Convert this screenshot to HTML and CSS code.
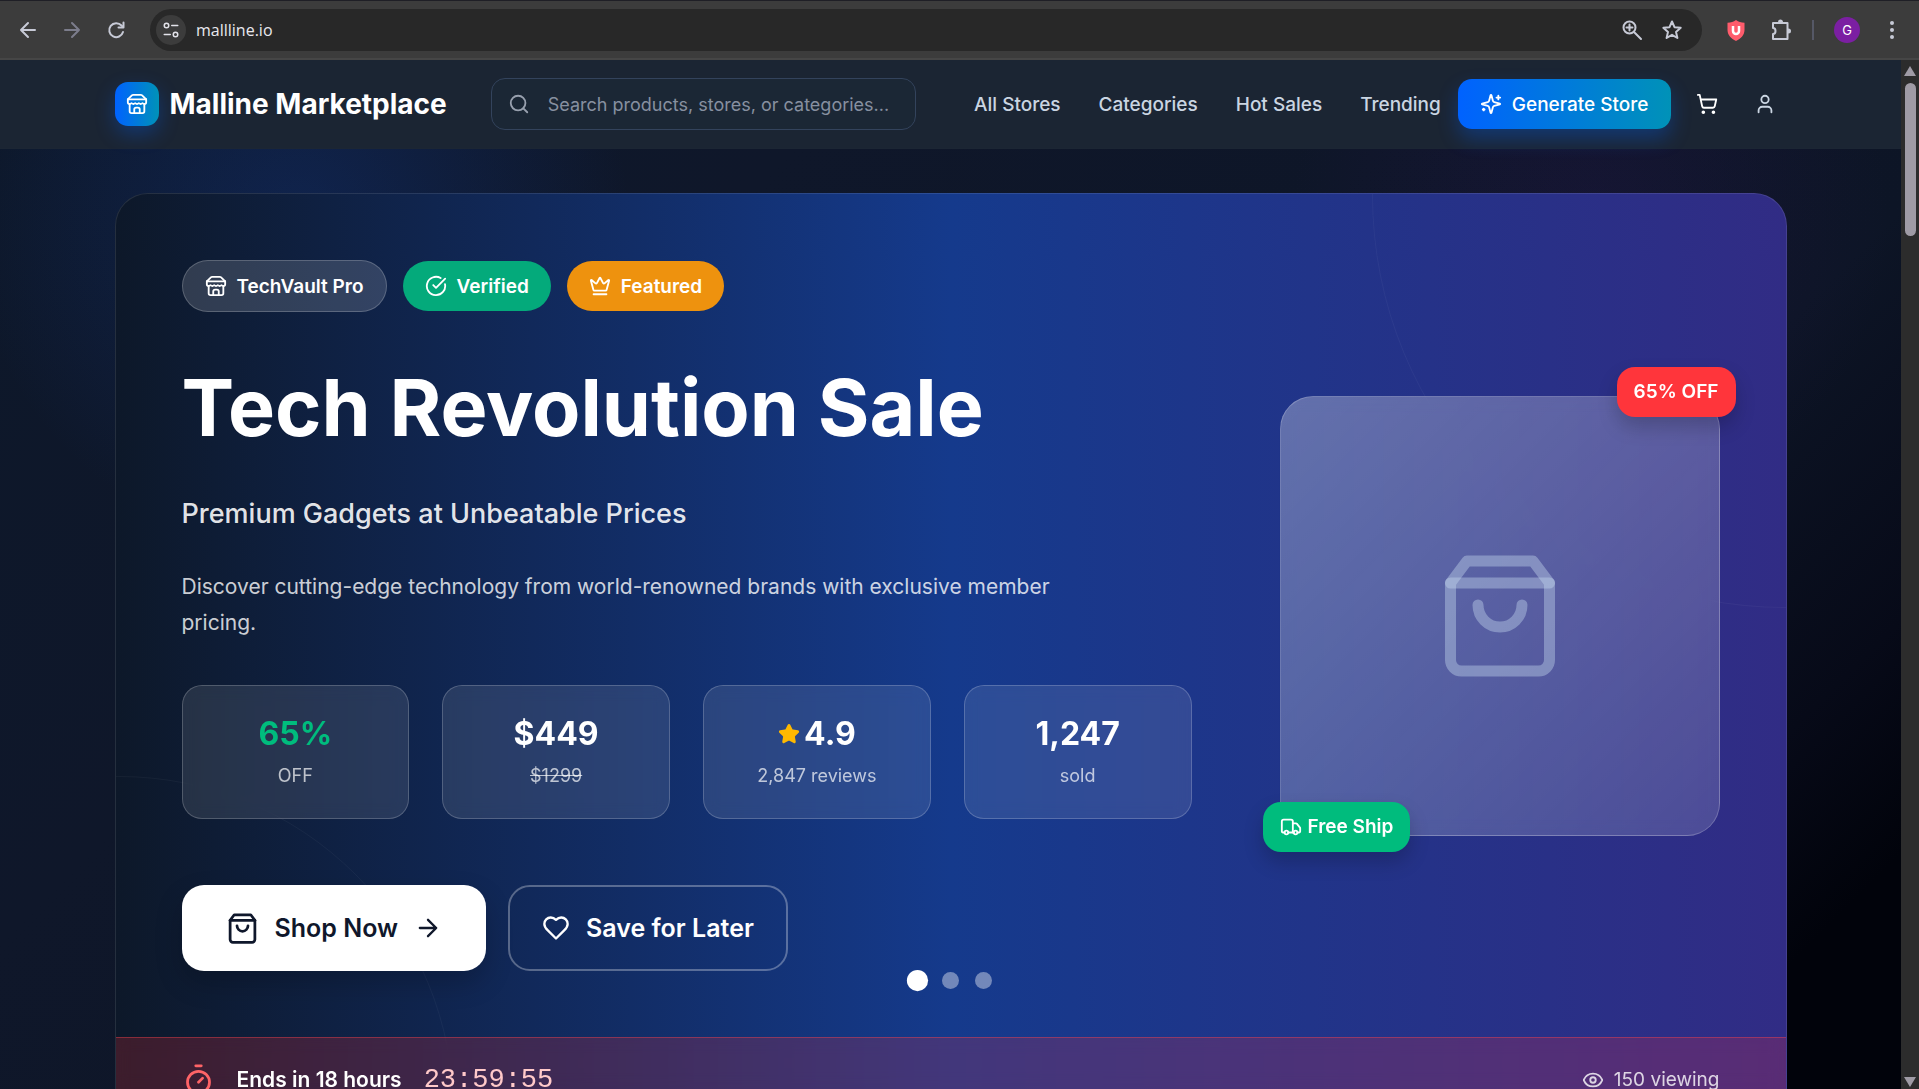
FILE: index.html
```html
<!DOCTYPE html>
<html lang="en">
    <head>
        <meta charset="utf-8">
        <title>Malline Marketplace</title>
        <link rel="stylesheet" href="styles.css">
    </head>
    <body>
        <!-- shared icons -->
        <svg class="sprite" aria-hidden="true">
            <symbol id="store" viewBox="0 0 24 24"><path d="m2 7 4.41-4.41A2 2 0 0 1 7.83 2h8.34a2 2 0 0 1 1.42.59L22 7"/><path d="M4 12v8a2 2 0 0 0 2 2h12a2 2 0 0 0 2-2v-8"/><path d="M15 22v-4a2 2 0 0 0-2-2h-2a2 2 0 0 0-2 2v4"/><path d="M2 7h20"/><path d="M22 7v3a2 2 0 0 1-2 2a2.7 2.7 0 0 1-1.59-.63.7.7 0 0 0-.82 0A2.7 2.7 0 0 1 16 12a2.7 2.7 0 0 1-1.59-.63.7.7 0 0 0-.82 0A2.7 2.7 0 0 1 12 12a2.7 2.7 0 0 1-1.59-.63.7.7 0 0 0-.82 0A2.7 2.7 0 0 1 8 12a2.7 2.7 0 0 1-1.59-.63.7.7 0 0 0-.82 0A2.7 2.7 0 0 1 4 12a2 2 0 0 1-2-2V7"/></symbol>
            <symbol id="bag" viewBox="0 0 24 24"><path d="M6 2 3 6v14a2 2 0 0 0 2 2h14a2 2 0 0 0 2-2V6l-3-4Z"/><path d="M3 6h18"/><path d="M16 10a4 4 0 0 1-8 0"/></symbol>
        </svg>

        <div class="toolbar">
            <button class="tool" aria-label="Back"><svg class="icon" viewBox="0 0 24 24"><path d="M19 12H5M12 5l-7 7 7 7"/></svg></button>
            <button class="tool dim" aria-label="Forward"><svg class="icon" viewBox="0 0 24 24"><path d="M5 12h14M12 5l7 7-7 7"/></svg></button>
            <button class="tool" aria-label="Reload"><svg class="icon" viewBox="0 0 24 24"><path d="M19 14a7 7 0 1 1-1.500-6.500L19 9"/><path d="M19.500 4.500v5h-5"/></svg></button>
            <div class="address">
                <button class="site-info" aria-label="Site information"><svg class="icon" viewBox="0 0 24 24"><circle cx="6" cy="6" r="3"/><path d="M13 6h8M3 18h8"/><circle cx="18" cy="18" r="3"/></svg></button>
                <input class="url" type="text" value="mallline.io" aria-label="Address">
                <button class="tool" aria-label="Zoom"><svg class="icon" viewBox="0 0 24 24"><circle cx="9.500" cy="9.500" r="6"/><path d="m14 14 7 7M6.500 9.500h6M9.500 6.500v6"/></svg></button>
                <button class="tool" aria-label="Bookmark"><svg class="icon" viewBox="0 0 24 24"><path d="m12 3.500 2.500 5.700 6.200.6-4.700 4.100 1.400 6.100-5.400-3.200L6.600 20 8 13.900 3.300 9.800l6.200-.6z"/></svg></button>
            </div>
            <button class="tool" aria-label="Shield extension"><svg viewBox="0 0 24 24"><path fill="#ff5c6c" d="M12 2c2.500 2 5 2.500 8.500 2.800V12c0 5-3.500 8.500-8.500 11-5-2.500-8.500-6-8.500-11V4.800C7 4.500 9.500 4 12 2z"/><path fill="none" stroke="#fff" stroke-width="2.500" d="M9 8v5a3 3 0 0 0 6 0V8"/></svg></button>
            <button class="tool" aria-label="Extensions"><svg class="icon" viewBox="0 0 24 24"><path d="M5 10V5h14.500v16H5v-5c1.600 0 2.500-1.200 2.500-3S6.600 10 5 10z"/><path fill="currentColor" d="M11 4a1.500 1.500 0 0 1 3 0zM20.500 11.500a1.500 1.500 0 0 1 0 3z"/></svg></button>
            <span class="divider"></span>
            <button class="avatar" aria-label="Profile">G</button>
            <button class="tool" aria-label="Menu"><svg viewBox="0 0 24 24" fill="#c7cad6"><circle cx="12" cy="5" r="2"/><circle cx="12" cy="12" r="2"/><circle cx="12" cy="19" r="2"/></svg></button>
        </div>

        <div class="window">
            <div class="page">
                <header class="header">
                    <div class="container header-row">
                        <a class="brand" href="#">
                            <span class="brand-logo"><svg class="icon"><use href="#store"/></svg></span>
                            Malline Marketplace
                        </a>
                        <label class="search">
                            <svg class="icon" viewBox="0 0 24 24"><circle cx="11" cy="11" r="8"/><path d="m21 21-4.300-4.300"/></svg>
                            <input type="text" placeholder="Search products, stores, or categories..." aria-label="Search">
                        </label>
                        <nav class="nav">
                            <a href="#">All Stores</a>
                            <a href="#">Categories</a>
                            <a href="#">Hot Sales</a>
                            <a href="#">Trending</a>
                        </nav>
                        <div class="actions">
                            <button class="generate">
                                <svg class="icon" viewBox="0 0 24 24"><path d="M9.937 15.500A2 2 0 0 0 8.500 14.063l-6.135-1.582a.5.5 0 0 1 0-.962L8.500 9.936A2 2 0 0 0 9.937 8.500l1.582-6.135a.5.5 0 0 1 .963 0L14.063 8.500A2 2 0 0 0 15.500 9.937l6.135 1.581a.5.5 0 0 1 0 .964L15.500 14.063a2 2 0 0 0-1.437 1.437l-1.582 6.135a.5.5 0 0 1-.963 0z"/><path d="M20 3v4M22 5h-4M4 17v2M5 18H3"/></svg>
                                Generate Store
                            </button>
                            <button class="icon-btn" aria-label="Cart"><svg class="icon" viewBox="0 0 24 24"><circle cx="8" cy="21" r="1"/><circle cx="19" cy="21" r="1"/><path d="M2.050 2.050h2l2.660 12.420a2 2 0 0 0 2 1.580h9.780a2 2 0 0 0 1.950-1.570l1.650-7.430H5.120"/></svg></button>
                            <button class="icon-btn account" aria-label="Account"><svg class="icon" viewBox="0 0 24 24"><path d="M19 21v-2a4 4 0 0 0-4-4H9a4 4 0 0 0-4 4v2"/><circle cx="12" cy="7" r="4"/></svg></button>
                        </div>
                    </div>
                </header>

                <main class="container">
                    <section class="hero">
                        <div class="hero-body">
                            <div class="hero-text">
                                <div class="badges">
                                    <span class="badge badge-store"><svg class="icon"><use href="#store"/></svg>TechVault Pro</span>
                                    <span class="badge badge-verified"><svg class="icon" viewBox="0 0 24 24"><path d="M21.801 10A10 10 0 1 1 17 3.335"/><path d="m9 11 3 3L22 4"/></svg>Verified</span>
                                    <span class="badge badge-featured"><svg class="icon" viewBox="0 0 24 24"><path d="M11.562 3.266a.5.5 0 0 1 .876 0L15.390 8.870a1 1 0 0 0 1.516.294L21.183 5.500a.5.5 0 0 1 .798.519l-2.834 10.246a1 1 0 0 1-.956.734H5.810a1 1 0 0 1-.957-.734L2.020 6.020a.5.5 0 0 1 .798-.519l4.276 3.664a1 1 0 0 0 1.516-.294z"/><path d="M5 21h14"/></svg>Featured</span>
                                </div>
                                <div class="copy">
                                    <h1>Tech Revolution Sale</h1>
                                    <h2>Premium Gadgets at Unbeatable Prices</h2>
                                    <p>Discover cutting-edge technology from world-renowned brands with exclusive member pricing.</p>
                                </div>
                                <div class="stats">
                                    <div class="stat"><strong class="green">65%</strong><span>OFF</span></div>
                                    <div class="stat"><strong>$449</strong><s>$1299</s></div>
                                    <div class="stat"><strong><svg class="star" viewBox="0 0 24 24"><path d="M11.525 2.295a.53.53 0 0 1 .95 0l2.310 4.679a2.123 2.123 0 0 0 1.595 1.160l5.166.756a.53.53 0 0 1 .294.904l-3.736 3.638a2.123 2.123 0 0 0-.611 1.878l.882 5.140a.53.53 0 0 1-.771.560l-4.618-2.428a2.122 2.122 0 0 0-1.973 0L6.396 21.010a.53.53 0 0 1-.770-.560l.881-5.139a2.122 2.122 0 0 0-.611-1.879L2.160 9.795a.53.53 0 0 1 .294-.906l5.165-.755a2.122 2.122 0 0 0 1.597-1.160z"/></svg>4.9</strong><span>2,847 reviews</span></div>
                                    <div class="stat"><strong>1,247</strong><span>sold</span></div>
                                </div>
                                <div class="buttons">
                                    <button class="btn btn-shop">
                                        <svg class="icon"><use href="#bag"/></svg>
                                        Shop Now
                                        <svg class="icon arrow" viewBox="0 0 24 24"><path d="M5 12h14M12 5l7 7-7 7"/></svg>
                                    </button>
                                    <button class="btn btn-save">
                                        <svg class="icon" viewBox="0 0 24 24"><path d="M19 14c1.490-1.460 3-3.210 3-5.500A5.500 5.500 0 0 0 16.500 3c-1.760 0-3 .5-4.500 2-1.500-1.500-2.740-2-4.500-2A5.500 5.500 0 0 0 2 8.500c0 2.300 1.500 4.050 3 5.500l7 7Z"/></svg>
                                        Save for Later
                                    </button>
                                </div>
                            </div>
                            <div class="product">
                                <svg class="icon product-icon"><use href="#bag"/></svg>
                                <span class="tag tag-off">65% OFF</span>
                                <span class="tag tag-ship"><svg class="icon" viewBox="0 0 24 24"><path d="M14 18V6a2 2 0 0 0-2-2H4a2 2 0 0 0-2 2v11a1 1 0 0 0 1 1h2"/><path d="M15 18H9"/><path d="M19 18h2a1 1 0 0 0 1-1v-3.650a1 1 0 0 0-.22-.624l-3.480-4.350A1 1 0 0 0 17.520 8H14"/><circle cx="17" cy="18" r="2"/><circle cx="7" cy="18" r="2"/></svg>Free Ship</span>
                            </div>
                            <div class="dots">
                                <button class="dot active" aria-label="Slide 1"></button>
                                <button class="dot" aria-label="Slide 2"></button>
                                <button class="dot" aria-label="Slide 3"></button>
                            </div>
                        </div>
                        <div class="deal">
                            <svg class="icon deal-icon" viewBox="0 0 24 24"><path d="M10 2h4"/><path d="m12 14 3-3"/><circle cx="12" cy="14" r="8"/></svg>
                            <strong>Ends in 18 hours</strong>
                            <time class="countdown">23:59:55</time>
                            <span class="viewing"><svg class="icon" viewBox="0 0 24 24"><path d="M2.062 12.348a1 1 0 0 1 0-.696 10.750 10.750 0 0 1 19.876 0 1 1 0 0 1 0 .696 10.750 10.750 0 0 1-19.876 0"/><circle cx="12" cy="12" r="3"/></svg>150 viewing</span>
                        </div>
                    </section>
                </main>
            </div>
            <div class="scrollbar">
                <span class="scroll-up"></span>
                <span class="scroll-thumb"></span>
                <span class="scroll-down"></span>
            </div>
        </div>
    </body>
</html>
```

FILE: styles.css
```css
* {
    box-sizing: border-box;
}
body {
    margin: 0;
    height: 100vh;
    display: flex;
    flex-direction: column;
    overflow: hidden;
    background: #020308;
    color: #fff;
    font-family: Inter, "Liberation Sans", sans-serif;
    font-size: 19px;
}
button, input {
    font-family: inherit;
    color: inherit;
    border: 0;
    padding: 0;
    background: none;
}
a {
    color: inherit;
    text-decoration: none;
}
h1, h2, p {
    margin: 0;
}
.sprite {
    position: absolute;
    width: 0;
    height: 0;
}
.icon {
    width: 22px;
    height: 22px;
    flex: none;
    fill: none;
    stroke: currentColor;
    stroke-width: 2;
    stroke-linecap: round;
    stroke-linejoin: round;
}

/* browser toolbar */
.toolbar {
    display: flex;
    align-items: center;
    gap: 20px;
    height: 60px;
    flex: none;
    padding: 0 15px 0 16px;
    background: #3c3c3c;
    border-top: 1px solid #1f1f26;
    border-bottom: 2px solid #464646;
    color: #c7cad6;
}
.tool {
    width: 24px;
    height: 24px;
    flex: none;
}
.tool svg {
    display: block;
    width: 24px;
    height: 24px;
}
.dim {
    color: #7c7d8c;
}
.address {
    flex: 1;
    display: flex;
    align-items: center;
    gap: 16px;
    height: 42px;
    margin: 0 2px;
    padding: 0 18px 0 6px;
    border-radius: 21px;
    background: #282828;
}
.site-info {
    display: flex;
    align-items: center;
    justify-content: center;
    width: 30px;
    height: 30px;
    border-radius: 50%;
    background: #3c3c3c;
    color: #e3e3ea;
}
.site-info .icon {
    width: 18px;
    height: 18px;
}
.url {
    flex: 1;
    margin-left: -6px;
    font-family: "Open Sans", sans-serif;
    font-size: 16px;
    color: #e8e8ee;
    outline: none;
}
.divider {
    width: 2px;
    height: 20px;
    background: #555866;
}
.avatar {
    width: 26px;
    height: 26px;
    border-radius: 50%;
    background: #7b1fa2;
    font-size: 13px;
    color: #fff;
}

/* page */
.window {
    flex: 1;
    min-height: 0;
    display: flex;
}
.page {
    flex: 1;
    min-width: 0;
    overflow: hidden;
    background:
        radial-gradient(circle at 300px 160px, rgba(21, 70, 180, 0.26), transparent 330px),
        radial-gradient(circle at 1590px 160px, rgba(60, 20, 110, 0.18), transparent 300px),
        linear-gradient(135deg, #0d182a 0%, #0f172a 30%, #0d1526 70%, #070a18 84%, #01030b 92%);
}
.container {
    max-width: 1716px;
    margin: 0 auto;
    padding: 0 22px;
}
.header {
    border-bottom: 1px solid #1c2634;
    background: #1b2533;
}
.header-row {
    display: flex;
    align-items: center;
    height: 88px;
}
.brand {
    display: flex;
    align-items: center;
    gap: 11px;
    font-size: 28px;
    font-weight: 700;
    white-space: nowrap;
}
.brand-logo {
    display: flex;
    align-items: center;
    justify-content: center;
    width: 44px;
    height: 44px;
    border-radius: 13px;
    background: linear-gradient(90deg, #0062ff, #0092b8);
    box-shadow: 0 8px 20px rgba(0, 98, 255, 0.3);
}
.search {
    flex: 1;
    display: flex;
    align-items: center;
    gap: 18px;
    max-width: 425px;
    height: 52px;
    margin-left: 44px;
    padding: 0 16px;
    border: 1px solid #33435c;
    border-radius: 14px;
    background: #1b2735;
    color: #98a0ae;
}
.search input {
    flex: 1;
    min-width: 0;
    font-size: 18px;
    outline: none;
}
.search input::placeholder {
    color: #8790a0;
}
.nav {
    display: flex;
    gap: 38px;
    margin-left: auto;
    font-weight: 500;
    color: #cad5e2;
    white-space: nowrap;
}
.actions {
    display: flex;
    align-items: center;
    gap: 14px;
    margin-left: 17px;
}
.generate {
    display: flex;
    align-items: center;
    gap: 10px;
    height: 50px;
    padding: 0 22px;
    border-radius: 14px;
    background: linear-gradient(90deg, #0062ff, #0092b8);
    box-shadow: 0 10px 20px rgba(0, 98, 255, 0.3);
    font-size: 19px;
    font-weight: 500;
    white-space: nowrap;
}
.icon-btn {
    display: flex;
    align-items: center;
    justify-content: center;
    width: 44px;
    height: 44px;
}
.account {
    color: #cad5e2;
}

/* hero */
.hero {
    position: relative;
    overflow: hidden;
    margin-top: 44px;
    border: 1px solid rgba(255, 255, 255, 0.1);
    border-radius: 33px;
    background: linear-gradient(90deg, #0d1829, #153a8c 50%, #312c85) border-box;
}
.hero::before, .hero::after {
    content: "";
    position: absolute;
    border: 1px solid rgba(255, 255, 255, 0.04);
    border-radius: 50%;
}
.hero::before {
    top: -412px;
    right: -412px;
    width: 824px;
    height: 824px;
}
.hero::after {
    top: 582px;
    left: -332px;
    width: 668px;
    height: 668px;
}
.hero-body {
    position: relative;
    z-index: 1;
    display: grid;
    grid-template-columns: minmax(0, 1fr) 440px;
    gap: 88px;
    align-items: center;
    padding: 66px;
}
.hero-text {
    display: flex;
    flex-direction: column;
    gap: 44px;
}
.badges {
    display: flex;
    align-items: center;
    gap: 16px;
}
.badge {
    display: flex;
    align-items: center;
    gap: 10px;
    height: 50px;
    padding: 0 22px;
    border-radius: 26px;
    font-size: 19px;
    font-weight: 600;
}
.badge-store {
    height: 52px;
    border: 1px solid rgba(255, 255, 255, 0.2);
    background: rgba(255, 255, 255, 0.15);
}
.badge-verified {
    background: #04aa7b;
}
.badge-featured {
    background: #ee920e;
}
.copy {
    display: flex;
    flex-direction: column;
    gap: 37px;
}
h1 {
    font-size: 79px;
    line-height: 102px;
    font-weight: 700;
}
h2 {
    font-size: 27px;
    line-height: 37px;
    font-weight: 500;
    color: rgba(255, 255, 255, 0.9);
}
.copy p {
    max-width: 924px;
    font-size: 21px;
    line-height: 36px;
    color: rgba(255, 255, 255, 0.8);
}
.stats {
    display: grid;
    grid-template-columns: repeat(4, 1fr);
    gap: 33px;
}
.stat {
    display: flex;
    flex-direction: column;
    align-items: center;
    gap: 6px;
    padding: 26px 16px 28px;
    border: 1px solid rgba(255, 255, 255, 0.2);
    border-radius: 20px;
    background: rgba(255, 255, 255, 0.1);
    backdrop-filter: blur(8px);
    font-size: 18px;
    line-height: 28px;
    color: rgba(255, 255, 255, 0.7);
}
.stat strong {
    display: flex;
    align-items: center;
    gap: 4px;
    font-size: 32px;
    line-height: 44px;
    color: #fff;
}
.stat .green {
    color: #00bc7d;
}
.star {
    width: 22px;
    height: 22px;
    fill: #ffb900;
    stroke: #ffb900;
    stroke-width: 2;
}
.buttons {
    display: flex;
    gap: 22px;
    margin-top: 22px;
}
.btn {
    display: flex;
    align-items: center;
    gap: 16px;
    height: 86px;
    border-radius: 22px;
    font-size: 25px;
    font-weight: 600;
}
.btn-shop {
    padding: 0 44px;
    background: #fff;
    color: #0f172b;
    box-shadow: 0 12px 28px rgba(0, 0, 0, 0.2);
}
.btn-shop .icon {
    width: 33px;
    height: 33px;
}
.btn-shop .arrow {
    width: 28px;
    height: 28px;
}
.btn-save {
    padding: 0 32px;
    border: 2px solid rgba(255, 255, 255, 0.3);
}
.btn-save .icon {
    width: 28px;
    height: 28px;
}
.product {
    position: relative;
    display: flex;
    align-items: center;
    justify-content: center;
    aspect-ratio: 1;
    border: 1px solid rgba(255, 255, 255, 0.2);
    border-radius: 33px;
    background: linear-gradient(135deg, rgba(255, 255, 255, 0.3), rgba(255, 255, 255, 0.15));
    backdrop-filter: blur(8px);
}
.product-icon {
    width: 132px;
    height: 132px;
    color: rgba(200, 220, 240, 0.4);
}
.tag {
    position: absolute;
    display: flex;
    align-items: center;
    gap: 6px;
    height: 50px;
    padding: 0 17px;
    border-radius: 18px;
    font-size: 19px;
    font-weight: 600;
    box-shadow: 0 10px 20px rgba(0, 0, 0, 0.2);
}
.tag-off {
    top: -30px;
    right: -17px;
    background: #ff353b;
}
.tag-ship {
    bottom: -17px;
    left: -18px;
    background: #00bc7d;
}
.dots {
    position: absolute;
    left: 0;
    right: 0;
    bottom: 48px;
    display: flex;
    align-items: center;
    justify-content: center;
    gap: 16px;
}
.dot {
    width: 17px;
    height: 17px;
    border-radius: 50%;
    background: rgba(255, 255, 255, 0.4);
}
.dot.active {
    background: #fff;
    transform: scale(1.25);
}
.deal {
    position: relative;
    z-index: 1;
    display: flex;
    align-items: center;
    gap: 22px;
    height: 84px;
    padding: 0 66px;
    border-top: 1px solid rgba(251, 70, 80, 0.4);
    background: rgba(251, 44, 54, 0.2);
    backdrop-filter: blur(8px);
}
.deal strong {
    font-size: 21px;
    font-weight: 600;
}
.deal-icon {
    width: 33px;
    height: 33px;
    color: #ff6467;
}
.countdown {
    font-family: "Liberation Mono", monospace;
    font-size: 27px;
    color: #ffc9c9;
}
.viewing {
    display: flex;
    align-items: center;
    gap: 10px;
    margin-left: auto;
    color: rgba(255, 255, 255, 0.8);
}

/* scrollbar */
.scrollbar {
    display: flex;
    flex-direction: column;
    align-items: center;
    width: 18px;
    padding: 6px 0 2px;
    background: #2c2c2c;
}
.scroll-up, .scroll-down {
    border: 6px solid transparent;
}
.scroll-up {
    border-top: 0;
    border-bottom: 10px solid #9f9ba5;
}
.scroll-down {
    margin-top: auto;
    border-bottom: 0;
    border-top: 10px solid #9f9ba5;
}
.scroll-thumb {
    width: 11px;
    height: 153px;
    margin-top: 7px;
    border-radius: 6px;
    background: #9f9ba5;
}
```
